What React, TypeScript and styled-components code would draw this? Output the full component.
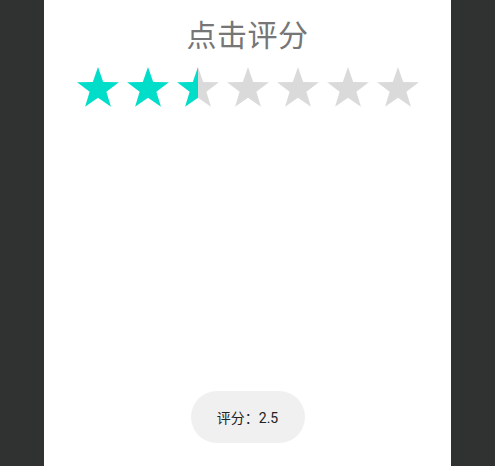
import React from "react";
import styled, { createGlobalStyle } from "styled-components";

const Global = createGlobalStyle`
  html, body { margin: 0; padding: 0; background: #303231; height: 100%; }
  #root { height: 100%; }
  * { box-sizing: border-box; }
`;

const Page = styled.div`
  display: flex;
  justify-content: center;
  height: 466px;
  background: #303231;
`;

const Panel = styled.div`
  width: 407px;
  height: 466px;
  background: #ffffff;
  display: flex;
  flex-direction: column;
  align-items: center;
  font-family: "Noto Sans CJK SC", "Noto Sans", sans-serif;
`;

const Title = styled.div`
  margin-top: 13px;
  font-size: 30px;
  line-height: 40px;
  color: #767676;
  letter-spacing: 0.5px;
`;

const StarRow = styled.div`
  display: flex;
  gap: 8px;
  margin-top: 14px;
`;

const Spacer = styled.div`
  flex: 1;
`;

const Pill = styled.div`
  width: 114px;
  height: 52px;
  border-radius: 26px;
  background: #f0f0f0;
  color: #222;
  font-family: Roboto, "Noto Sans CJK SC", sans-serif;
  font-size: 14px;
  display: flex;
  align-items: center;
  justify-content: center;
  margin-bottom: 23px;
`;

const FILL = "#00ddc9";
const EMPTY = "#dadada";

function starPoints(cx: number, cy: number, R: number, r: number) {
  const pts: string[] = [];
  for (let i = 0; i < 10; i++) {
    const rad = i % 2 === 0 ? R : r;
    const a = -Math.PI / 2 + (i * Math.PI) / 5;
    pts.push(`${(cx + rad * Math.cos(a)).toFixed(3)},${(cy + rad * Math.sin(a)).toFixed(3)}`);
  }
  return pts.join(" ");
}

const R = 22;
const r = R * 0.4;
const W = 42;
const H = 40;
const PTS = starPoints(W / 2, R, R, r);

const Star: React.FC<{ fill: number; id: string }> = ({ fill, id }) => (
  <svg width={W} height={H} viewBox={`0 0 ${W} ${H}`}>
    <defs>
      <linearGradient id={id} x1="0" x2="1" y1="0" y2="0">
        <stop offset={fill} stopColor={FILL} />
        <stop offset={fill} stopColor={EMPTY} />
      </linearGradient>
    </defs>
    <polygon points={PTS} fill={`url(#${id})`} />
  </svg>
);

export default function App() {
  const score = 2.5;
  const stars = Array.from({ length: 7 }, (_, i) => Math.max(0, Math.min(1, score - i)));
  return (
    <>
      <Global />
      <Page>
        <Panel>
          <Title>点击评分</Title>
          <StarRow>
            {stars.map((f, i) => (
              <Star key={i} fill={f} id={`star-grad-${i}`} />
            ))}
          </StarRow>
          <Spacer />
          <Pill>评分：{score}</Pill>
        </Panel>
      </Page>
    </>
  );
}
